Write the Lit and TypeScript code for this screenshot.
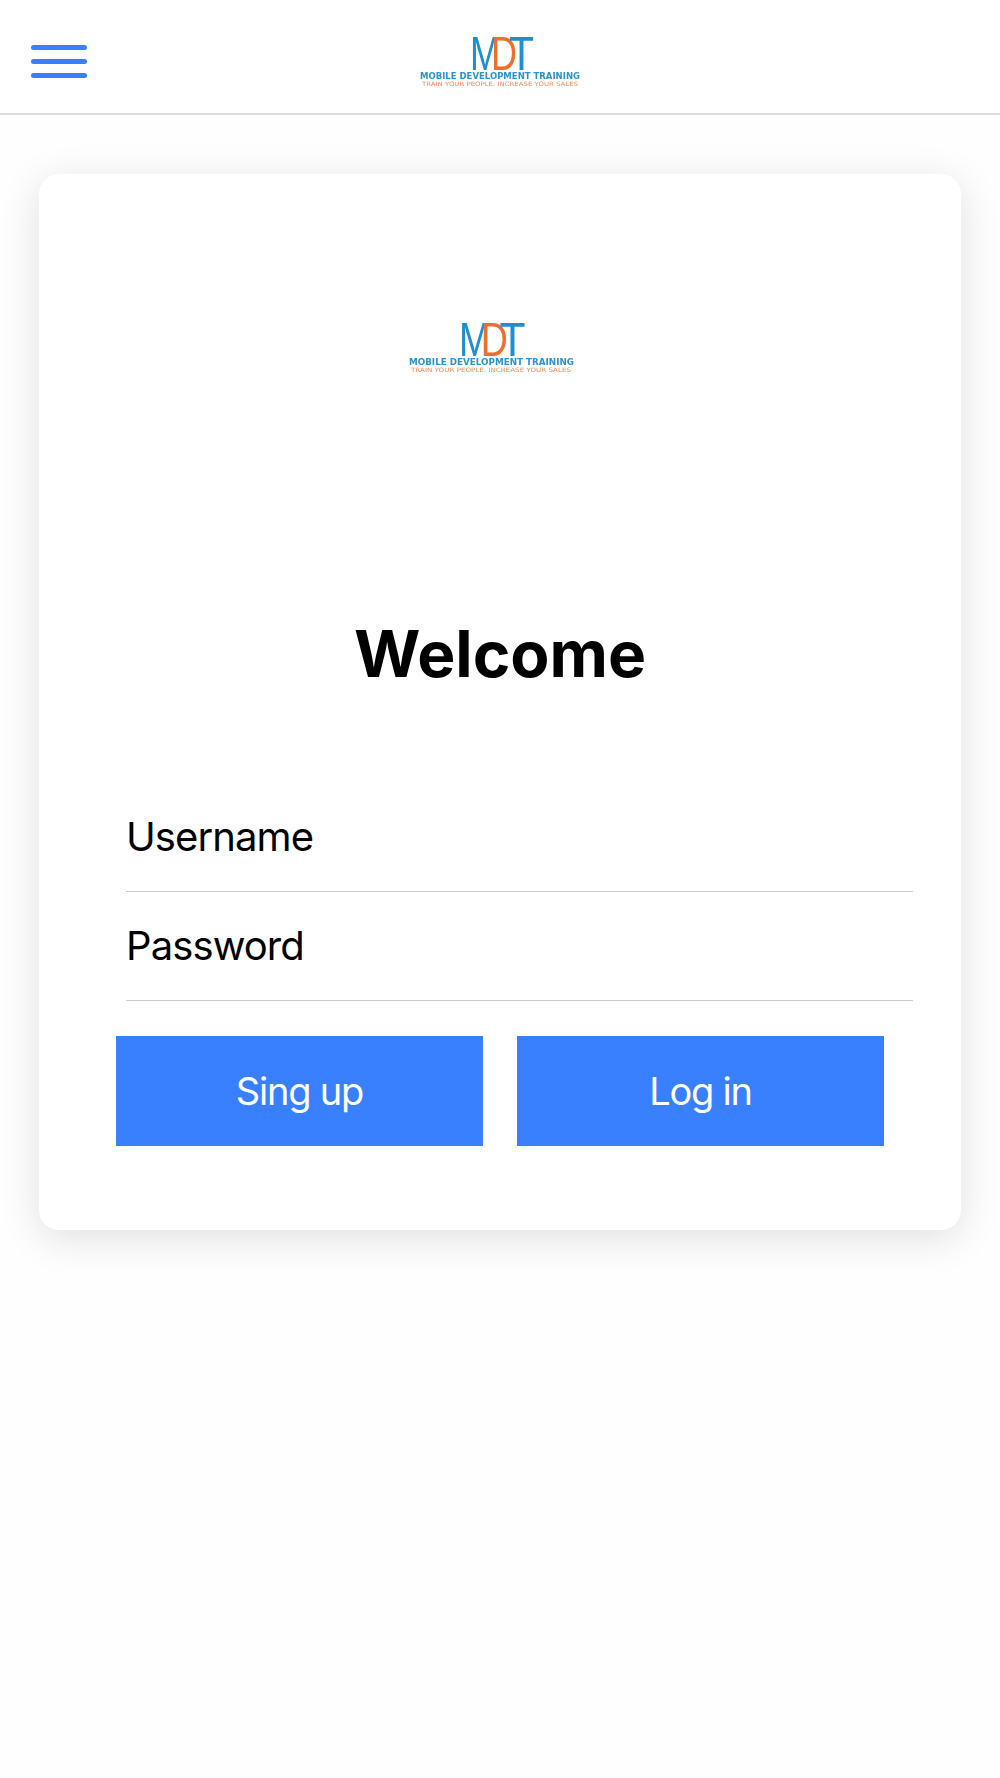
import { LitElement, html, css } from "lit";
import { customElement, property } from "lit/decorators.js";

@customElement("mdt-logo")
class MdtLogo extends LitElement {
  @property({ type: Number }) lineW = 160;
  @property({ type: Number }) tagW = 156;
  @property({ type: Number }) dScale = 1;
  static styles = css`
    :host { display: block; line-height: 0; }
    svg { display: block; filter: blur(0.35px); overflow: visible; }
    .big { font-family: "Liberation Sans", sans-serif; font-size: 48px; }
    .b { fill: #1f8fcf; }
    .o { fill: #ee6f2d; }
    .line { font-family: "DejaVu Sans", sans-serif; font-size: 8px; font-weight: 700; fill: #2a93cf; }
    .tag { font-family: "DejaVu Sans", sans-serif; font-size: 6px; fill: #ee8a55; }
  `;
  render() {
    const s = this.dScale;
    return html`<svg width="170" height="56" viewBox="0 0 170 56">
      <text class="big b" x=${55} y="35" textLength=${30 * s} lengthAdjust="spacingAndGlyphs">M</text>
      <text class="big o" x=${55 + 21 * s} y="35" textLength=${26 * s} lengthAdjust="spacingAndGlyphs">D</text>
      <text class="big b" x=${55 + 39 * s} y="35" textLength=${25 * s} lengthAdjust="spacingAndGlyphs">T</text>
      <text class="line" x="5" y="44" textLength=${this.lineW} lengthAdjust="spacingAndGlyphs">MOBILE DEVELOPMENT TRAINING</text>
      <text class="tag" x="7" y="51" textLength=${this.tagW} lengthAdjust="spacingAndGlyphs">TRAIN YOUR PEOPLE. INCREASE YOUR SALES</text>
    </svg>`;
  }
}

@customElement("app-root")
class AppRoot extends LitElement {
  static styles = css`
    :host { display: block; min-height: 1778px; background: #fefefe; font-family: Inter, "Liberation Sans", sans-serif; color: #000; }
    .header { height: 113px; border-bottom: 2px solid #dcdcdc; background: #fff; display: flex; align-items: center; justify-content: center; position: relative; box-sizing: content-box; }
    .burger { position: absolute; left: 31px; top: 45px; width: 56px; display: flex; flex-direction: column; gap: 9px; }
    .burger span { height: 5px; border-radius: 3px; background: #3880ff; }
    .headlogo { margin-top: 13px; }
    .card { margin: 59px 39px 0; height: 1056px; box-sizing: border-box; background: #fff; border-radius: 20px; box-shadow: 0 8px 40px rgba(0,0,0,.12); padding-top: 147px; }
    .cardlogo { display: flex; justify-content: center; }
    .cardlogo mdt-logo { margin-left: -22px; }
    h1 { margin: 237px 0 0; text-align: center; font-size: 64px; font-weight: 700; line-height: 80px; }
    .fields { margin: 89px 48px 0 87px; }
    .field { border-bottom: 1px solid #ccc; display: flex; align-items: center; font-size: 40px; letter-spacing: -0.9px; padding-bottom: 2px; box-sizing: border-box; height: 109px; }
    .buttons { display: flex; gap: 34px; margin: 35px 0 0 77px; }
    .btn { width: 367px; height: 110px; background: #3880ff; color: #fff; display: flex; align-items: center; justify-content: center; font-size: 38px; letter-spacing: -1.2px; }
  `;
  render() {
    return html`
      <div class="header">
        <div class="burger"><span></span><span></span><span></span></div>
        <mdt-logo class="headlogo"></mdt-logo>
      </div>
      <div class="card">
        <div class="cardlogo"><mdt-logo .lineW=${165} .tagW=${160} .dScale=${1.04}></mdt-logo></div>
        <h1>Welcome</h1>
        <div class="fields">
          <div class="field">Username</div>
          <div class="field">Password</div>
        </div>
        <div class="buttons">
          <div class="btn">Sing up</div>
          <div class="btn">Log in</div>
        </div>
      </div>
    `;
  }
}
